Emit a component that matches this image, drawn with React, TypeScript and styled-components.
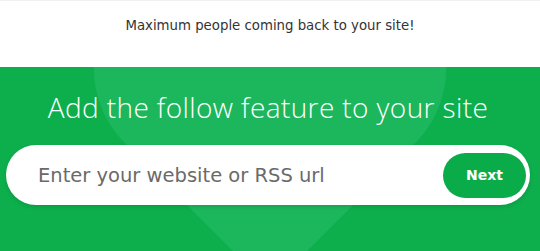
import styled, {createGlobalStyle} from "styled-components";

const GlobalStyle = createGlobalStyle`
    * {
        box-sizing: border-box;
    }

    body {
        margin: 0;
        background: #ffffff;
        font-family: "Open Sans", "DejaVu Sans", sans-serif;
    }
`

export default function App() {
    return (
        <>
            <GlobalStyle/>
            <Page>
                <Intro>
                    <IntroText>Maximum people coming back to your site!</IntroText>
                </Intro>
                <Feature>
                    <Heart viewBox="0 0 540 184" preserveAspectRatio="none">
                        <path d="M270 221 L121 72 A105.5 105.5 0 0 1 270 -77 A105.5 105.5 0 0 1 419 72 Z"/>
                    </Heart>
                    <FeatureTitle>Add the follow feature to your site</FeatureTitle>
                    <UrlForm onSubmit={(e) => e.preventDefault()}>
                        <UrlInput type="text" placeholder="Enter your website or RSS url"/>
                        <NextButton type="submit">Next</NextButton>
                    </UrlForm>
                </Feature>
            </Page>
        </>
    );
}


const Page = styled.main`
    width: 540px;
    height: 251px;
    overflow: hidden;
`

const Intro = styled.section`
    height: 67px;
    display: flex;
    justify-content: center;
    padding-top: 16px;
    border-top: 1px solid #f1f1f1;
`

const IntroText = styled.p`
    margin: 0;
    font-family: "DejaVu Sans", sans-serif;
    font-size: 13.3px;
    line-height: 18px;
    color: #333333;
`

const Feature = styled.section`
    position: relative;
    height: 184px;
    background: #0daf4c;
    display: flex;
    flex-direction: column;
    align-items: center;
    padding: 22px 10px 0 6px;

    &::before {
        content: '';
        position: absolute;
        top: 0;
        left: 50%;
        transform: translateX(-50%);
        border-left: 5px solid transparent;
        border-right: 5px solid transparent;
        border-top: 5px solid #ffffff;
    }
`

const Heart = styled.svg`
    position: absolute;
    inset: 0;
    width: 100%;
    height: 100%;
    fill: #1cb75c;
    pointer-events: none;
`

const FeatureTitle = styled.h2`
    position: relative;
    margin: 0;
    font-family: "Open Sans", sans-serif;
    font-weight: 300;
    font-size: 28px;
    line-height: 36px;
    letter-spacing: 0.4px;
    color: #ffffff;
`

const UrlForm = styled.form`
    position: relative;
    margin-top: 20px;
    width: 100%;
    height: 60px;
    display: flex;
    align-items: center;
    padding: 0 4px 0 30px;
    background: #ffffff;
    border-radius: 30px;
    box-shadow: 0 2px 4px rgba(0, 0, 0, 0.12);
`

const UrlInput = styled.input`
    flex: 1;
    min-width: 0;
    border: none;
    outline: none;
    background: transparent;
    font-family: "DejaVu Sans", sans-serif;
    font-size: 19.5px;
    color: #555555;

    &::placeholder {
        color: #6a6a6a;
    }
`

const NextButton = styled.button`
    width: 83px;
    height: 45px;
    border: none;
    border-radius: 23px;
    background: #0aac4a;
    color: #ffffff;
    font-family: "DejaVu Sans", sans-serif;
    font-weight: 700;
    font-size: 14px;
    cursor: pointer;
`
